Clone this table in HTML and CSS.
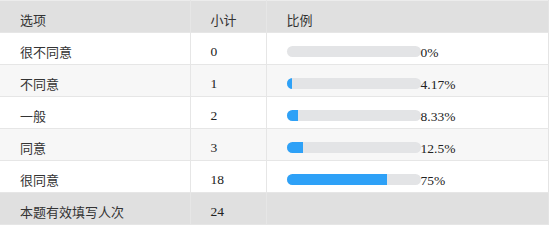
FILE: index.html
```html
<!DOCTYPE html>
<html lang="zh-CN">
<head>
<meta charset="utf-8">
<title>统计</title>
<link rel="stylesheet" href="styles.css">
</head>
<body>
<table class="stats">
  <colgroup>
    <col class="c-opt">
    <col class="c-num">
    <col class="c-pct">
  </colgroup>
  <thead>
    <tr class="head">
      <th>选项</th>
      <th>小计</th>
      <th>比例</th>
    </tr>
  </thead>
  <tbody>
    <tr>
      <td>很不同意</td>
      <td class="num">0</td>
      <td><div class="ratio"><div class="track"><div class="fill" style="width:0%"></div></div><span class="pct">0%</span></div></td>
    </tr>
    <tr class="alt">
      <td>不同意</td>
      <td class="num">1</td>
      <td><div class="ratio"><div class="track"><div class="fill" style="width:4.17%"></div></div><span class="pct">4.17%</span></div></td>
    </tr>
    <tr>
      <td>一般</td>
      <td class="num">2</td>
      <td><div class="ratio"><div class="track"><div class="fill" style="width:8.33%"></div></div><span class="pct">8.33%</span></div></td>
    </tr>
    <tr class="alt">
      <td>同意</td>
      <td class="num">3</td>
      <td><div class="ratio"><div class="track"><div class="fill" style="width:12.5%"></div></div><span class="pct">12.5%</span></div></td>
    </tr>
    <tr>
      <td>很同意</td>
      <td class="num">18</td>
      <td><div class="ratio"><div class="track"><div class="fill" style="width:75%"></div></div><span class="pct">75%</span></div></td>
    </tr>
  </tbody>
  <tfoot>
    <tr class="foot">
      <td>本题有效填写人次</td>
      <td class="num">24</td>
      <td></td>
    </tr>
  </tfoot>
</table>
</body>
</html>
```

FILE: styles.css
```css
html, body {
  margin: 0;
  padding: 0;
  background: #ffffff;
}

.stats {
  width: 549px;
  border-collapse: collapse;
  table-layout: fixed;
  font-family: "Liberation Serif", "Noto Sans CJK SC", serif;
  font-size: 13px;
  color: #333333;
  border-top: 1px solid #ececec;
  border-right: 1px solid #e4e4e4;
}

.c-opt { width: 190px; }
.c-num { width: 76px; }

.stats th,
.stats td {
  height: 32px;
  box-sizing: border-box;
  padding: 6px 0 0 20px;
  text-align: left;
  font-weight: normal;
  vertical-align: middle;
  border-bottom: 1px solid #e6e6e6;
  border-left: 1px solid #e6e6e6;
}

.stats th:first-child,
.stats td:first-child {
  border-left: none;
}

.head th {
  background: #e0e0e0;
}

.alt td {
  background: #f7f7f7;
}

.foot td {
  background: #e0e0e0;
}

.num {
  color: #222222;
  font-size: 13.5px;
}

.ratio {
  display: flex;
  align-items: center;
}

.track {
  width: 134px;
  height: 11px;
  border-radius: 6px;
  background: #e3e4e6;
  overflow: hidden;
  flex: none;
}

.fill {
  height: 100%;
  background: #2ea1f7;
}

.pct {
  color: #222222;
  font-size: 13.5px;
  line-height: 1;
  margin-top: 3px;
}
```
